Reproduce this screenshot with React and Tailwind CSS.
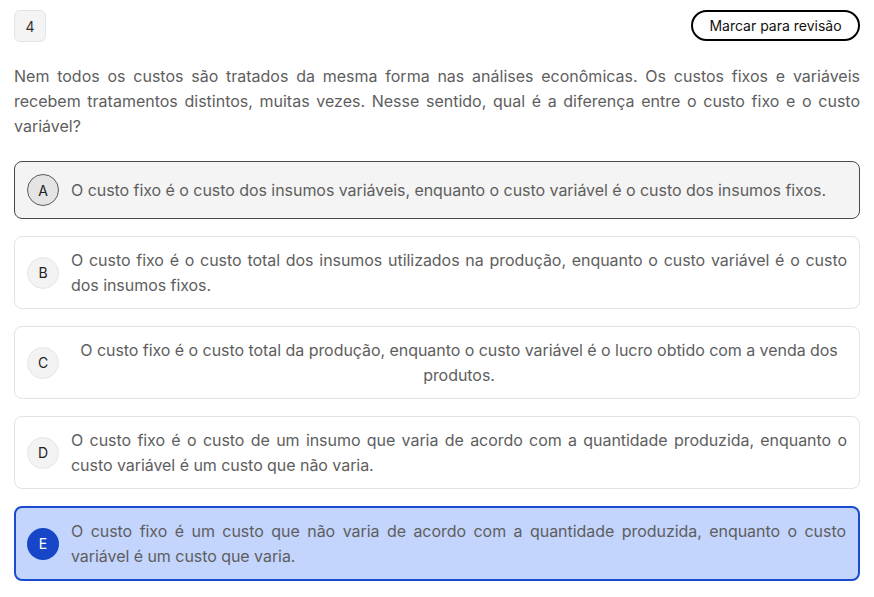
import React from "react";

const options = [
  { letter: "A", text: "O custo fixo é o custo dos insumos variáveis, enquanto o custo variável é o custo dos insumos fixos.", state: "hover" },
  { letter: "B", text: "O custo fixo é o custo total dos insumos utilizados na produção, enquanto o custo variável é o custo dos insumos fixos." },
  { letter: "C", text: "O custo fixo é o custo total da produção, enquanto o custo variável é o lucro obtido com a venda dos produtos.", center: true },
  { letter: "D", text: "O custo fixo é o custo de um insumo que varia de acordo com a quantidade produzida, enquanto o custo variável é um custo que não varia." },
  { letter: "E", text: "O custo fixo é um custo que não varia de acordo com a quantidade produzida, enquanto o custo variável é um custo que varia.", state: "selected" },
];

function Option({ o }) {
  let box = "border border-[#e3e3e3] bg-white";
  let circle = "bg-[#f3f3f3] border border-[#e6e6e6] text-[#222]";
  if (o.state === "hover") {
    box = "border border-[#4a4a4a] bg-[#f4f4f4]";
    circle = "bg-[#e4e4e4] border border-[#5a5a5a] text-[#222]";
  }
  if (o.state === "selected") {
    box = "border-2 border-[#1a4ccf] bg-[#c3d4fd]";
    circle = "bg-[#1747c8] text-white";
  }
  return (
    <div className={`flex items-center gap-3 rounded-lg min-h-[58px] py-[10.5px] pr-3 ${o.state === "selected" ? "pl-[11px]" : "pl-3"} ${box}`}>
      <div className={`w-8 h-8 shrink-0 rounded-full flex items-center justify-center text-[14px] ${circle}`}>
        {o.letter}
      </div>
      <p className={`flex-1 text-[16px] leading-[25px] tracking-[-0.05px] text-[#5e5e5e] ${o.center ? "text-center" : "text-justify"}`}>
        {o.text}
      </p>
    </div>
  );
}

export default function App() {
  return (
    <div className="w-[874px] h-[597px] bg-white px-[14px] pt-[10px] overflow-hidden" style={{ fontFamily: "Inter, 'Noto Sans', sans-serif" }}>
      <div className="flex justify-between items-start">
        <div className="w-8 h-8 rounded-md bg-[#f4f4f4] border border-[#e4e4e4] flex items-center justify-center text-[14px] text-[#333]">4</div>
        <button className="h-[31px] w-[169px] rounded-full border-2 border-black text-[14px] text-[#111] bg-white">Marcar para revisão</button>
      </div>
      <p className="mt-[22px] text-[16px] leading-[25px] text-[#5e5e5e] text-justify">
        Nem todos os custos são tratados da mesma forma nas análises econômicas. Os custos fixos e variáveis recebem tratamentos distintos, muitas vezes. Nesse sentido, qual é a diferença entre o custo fixo e o custo variável?
      </p>
      <div className="mt-[22px] flex flex-col gap-[17px]">
        {options.map(o => <Option key={o.letter} o={o} />)}
      </div>
    </div>
  );
}
